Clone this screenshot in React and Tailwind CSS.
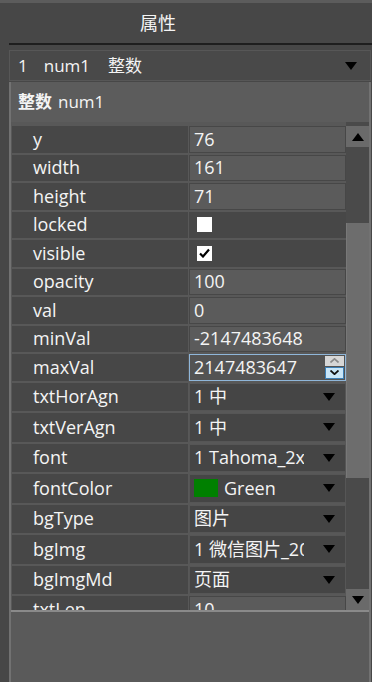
import React from "react";

const font = { fontFamily: '"Open Sans", "Noto Sans CJK SC", sans-serif' };

const rows = [
  { label: "y", type: "text", value: "76" },
  { label: "width", type: "text", value: "161" },
  { label: "height", type: "text", value: "71" },
  { label: "locked", type: "check", value: false },
  { label: "visible", type: "check", value: true },
  { label: "opacity", type: "text", value: "100" },
  { label: "val", type: "text", value: "0" },
  { label: "minVal", type: "text", value: "-2147483648" },
  { label: "maxVal", type: "spin", value: "2147483647" },
  { label: "txtHorAgn", type: "select", value: "1 中" },
  { label: "txtVerAgn", type: "select", value: "1 中" },
  { label: "font", type: "select", value: "1 Tahoma_2x12" },
  { label: "fontColor", type: "color", value: "Green" },
  { label: "bgType", type: "select", value: "图片" },
  { label: "bgImg", type: "select", value: "1 微信图片_20240101" },
  { label: "bgImgMd", type: "select", value: "页面" },
  { label: "txtLen", type: "text", value: "10" },
];

const Triangle = ({ up = false }) => (
  <svg width="12" height="8" viewBox="0 0 12 8">
    <polygon points={up ? "6,0 12,8 0,8" : "0,0 12,0 6,8"} fill="#000" />
  </svg>
);

const ValueCell = ({ row }) => {
  if (row.type === "text") {
    return (
      <div className="h-full p-[1px] bg-[#474747]">
        <div className="h-full bg-[#5b5b5b] pl-[4px] flex items-center text-[18px] text-[#f4f4f4]">
          {row.value}
        </div>
      </div>
    );
  }
  if (row.type === "check") {
    return (
      <div className="h-full bg-[#474747] flex items-center pl-[8px]">
        <div className="w-[15px] h-[15px] bg-white flex items-center justify-center">
          {row.value && (
            <svg width="11" height="10" viewBox="0 0 11 10">
              <path d="M1 5.5 L4 8.5 L10 1.5" stroke="#000" strokeWidth="2.2" fill="none" />
            </svg>
          )}
        </div>
      </div>
    );
  }
  if (row.type === "spin") {
    return (
      <div className="h-full border border-[#8fb6d9] bg-[#535353] flex items-center">
        <div className="flex-1 pl-[4px] text-[18px] text-[#f4f4f4]">{row.value}</div>
        <div className="w-[19px] h-full flex flex-col gap-[1px] py-[1px] mr-[1px]">
          <div className="flex-1 bg-[#d6d6d6] flex items-center justify-center">
            <svg width="9" height="5" viewBox="0 0 9 5">
              <path d="M0.5 4.5 L4.5 0.8 L8.5 4.5" stroke="#8a8a8a" strokeWidth="1.6" fill="none" />
            </svg>
          </div>
          <div className="flex-1 bg-[#c9e6f8] border border-[#3d7fb5] flex items-center justify-center">
            <svg width="9" height="5" viewBox="0 0 9 5">
              <path d="M0.5 0.5 L4.5 4.2 L8.5 0.5" stroke="#111" strokeWidth="1.8" fill="none" />
            </svg>
          </div>
        </div>
      </div>
    );
  }
  return (
    <div className="h-full border border-[#565656] bg-[#454545] flex items-center pl-[4px] pr-[10px]">
      <div className="w-[110px] overflow-hidden whitespace-nowrap flex items-center text-[18px] text-[#f4f4f4]">
        {row.type === "color" && (
          <span className="inline-block w-[24px] h-[18px] bg-[#008000] mr-[6px] shrink-0" />
        )}
        {row.value}
      </div>
      <div className="ml-auto flex items-center">
        <Triangle />
      </div>
    </div>
  );
};

const App = () => {
  return (
    <div
      className="w-[372px] h-[682px] bg-[#474747] overflow-hidden flex flex-col"
      style={font}
    >
      <div className="h-[3px] bg-[#5c5c5c]" />
      <div className="h-[40px] w-[316px] flex items-center justify-center text-[18px] text-[#f4f4f4]">
        属性
      </div>
      <div className="ml-[9px] h-[2px] bg-[#1e1e1e]" />
      <div className="ml-[9px] mr-[1px] mt-[5px] h-[31px] border border-[#575757] bg-[#494949] flex items-center pl-[8px] pr-[13px] text-[17px] text-[#f4f4f4]">
        <span>1</span>
        <span className="ml-[16px]">num1</span>
        <span className="ml-[18px]">整数</span>
        <span className="ml-auto flex items-center">
          <Triangle />
        </span>
      </div>

      <div className="ml-[9px] mr-[1px] mt-[1px] flex-1 flex flex-col border-l-2 border-r-2 border-[#727272]">
        <div className="h-[40px] bg-[#5c5c5c] flex items-center pl-[7px] text-[17px] text-[#f4f4f4]">
          <span className="font-bold">整数</span>
          <span className="ml-[6px]">num1</span>
        </div>

        <div className="h-[488px] flex">
          <div className="w-[335px] bg-[#585858] pt-[4px] pl-[1px] flex flex-col gap-[2px] overflow-hidden">
            {rows.map((row) => (
              <div
                key={row.label}
                className={`flex gap-[1px] shrink-0 ${
                  row.type === "select" || row.type === "color" ? "h-[28.5px]" : "h-[26.5px]"
                }`}
              >
                <div className="w-[176px] h-full bg-[#474747] pl-[21px] flex items-center text-[18px] text-[#f4f4f4]">
                  {row.label}
                </div>
                <div className="w-[157px] h-full">
                  <ValueCell row={row} />
                </div>
              </div>
            ))}
          </div>

          <div className="w-[23px] bg-[#4a4a4a] pt-[4px] flex flex-col">
            <div className="h-[21px] bg-[#6a6a6a] flex items-center justify-center">
              <Triangle up />
            </div>
            <div className="h-[76px]" />
            <div className="h-[255px] bg-[#6d6d6d] border-l border-[#787878]" />
            <div className="flex-1" />
            <div className="h-[21px] bg-[#6a6a6a] flex items-center justify-center">
              <Triangle />
            </div>
          </div>
        </div>

        <div className="h-[2px] bg-[#8a8a8a]" />
        <div className="flex-1 bg-[#5a5a5a]" />
      </div>
    </div>
  );
};

export default App;
